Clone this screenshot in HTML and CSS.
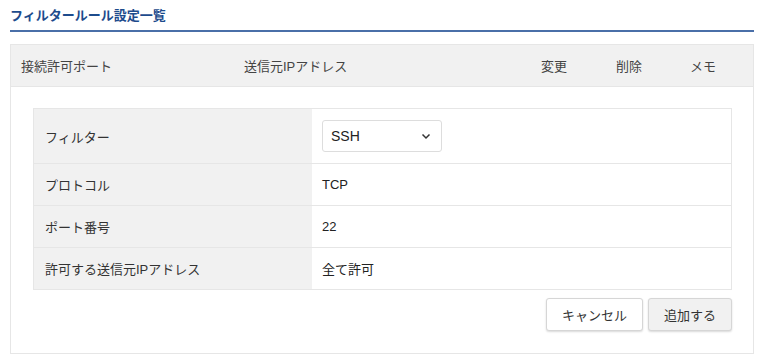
FILE: index.html
```html
<!DOCTYPE html>
<html lang="ja">
  <head>
    <meta charset="UTF-8" />
    <title>フィルタールール設定一覧</title>
    <link rel="stylesheet" href="styles.css">
  </head>
  <body>
    <div class="page">
      <h2 class="page-title">フィルタールール設定一覧</h2>

      <div class="rule-box">
        <div class="rule-header">
          <div>接続許可ポート</div>
          <div>送信元IPアドレス</div>
          <div>変更</div>
          <div>削除</div>
          <div>メモ</div>
        </div>

        <div class="rule-body">
          <div class="form-table">
            <div class="form-row first">
              <div class="form-label">フィルター</div>
              <div class="form-value">
                <div class="select">
                  <span>SSH</span>
                  <svg width="10" height="7" viewBox="0 0 10 7">
                    <path d="M1.5 1.5 L5 5 L8.5 1.5" fill="none" stroke="#333" stroke-width="1.5"/>
                  </svg>
                </div>
              </div>
            </div>
            <div class="form-row">
              <div class="form-label">プロトコル</div>
              <div class="form-value">TCP</div>
            </div>
            <div class="form-row">
              <div class="form-label">ポート番号</div>
              <div class="form-value">22</div>
            </div>
            <div class="form-row">
              <div class="form-label">許可する送信元IPアドレス</div>
              <div class="form-value">全て許可</div>
            </div>
          </div>

          <div class="actions">
            <button class="btn btn-cancel">キャンセル</button>
            <button class="btn btn-add">追加する</button>
          </div>
        </div>
      </div>
    </div>
  </body>
</html>
```

FILE: styles.css
```css
* {
  box-sizing: border-box;
}

body {
  margin: 0;
  padding: 0;
  background-color: #fff;
  color: #333;
  font-family: "Liberation Sans", "Noto Sans CJK JP", sans-serif;
  font-size: 13px;
}

.page {
  padding: 0 5px 0 10px;
}

/* title with blue underline */
.page-title {
  margin: 0;
  padding: 6px 0 4px;
  font-size: 13px;
  line-height: 20px;
  font-weight: bold;
  color: #1d4b8c;
  border-bottom: 2px solid #4a6fa8;
}

.rule-box {
  margin-top: 12px;
  border: 1px solid #e6e6e6;
}

.rule-header {
  display: grid;
  grid-template-columns: 223px 297px 75px 74px 1fr;
  align-items: center;
  height: 42px;
  padding-left: 10px;
  background-color: #f1f1f1;
  border-bottom: 1px solid #e6e6e6;
  color: #444;
}

.rule-body {
  padding: 21px 21px 22px 22px;
}

.form-table {
  border: 1px solid #e6e6e6;
}

.form-row {
  display: flex;
  height: 42px;
  border-top: 1px solid #e6e6e6;
}

.form-row.first {
  height: 54px;
  border-top: none;
}

.form-label {
  width: 278px;
  display: flex;
  align-items: center;
  padding-left: 11px;
  background-color: #f1f1f1;
}

.form-value {
  flex: 1;
  display: flex;
  align-items: center;
  padding-left: 10px;
  color: #222;
}

.select {
  width: 120px;
  height: 32px;
  display: flex;
  align-items: center;
  justify-content: space-between;
  padding: 0 10px 0 8px;
  border: 1px solid #ddd;
  border-radius: 3px;
  background-color: #fff;
  font-size: 14px;
}

.actions {
  display: flex;
  justify-content: flex-end;
  gap: 5px;
  margin-top: 8px;
}

.btn {
  height: 33px;
  padding: 0;
  font-family: inherit;
  font-size: 13px;
  color: #333;
  background-color: #fff;
  border: 1px solid #d6d6d6;
  border-radius: 3px;
  box-shadow: 0 1px 2px rgba(0, 0, 0, 0.15);
  white-space: nowrap;
}

.btn-cancel {
  width: 97px;
}

.btn-add {
  width: 84px;
  background-color: #f1f1f1;
}
```
